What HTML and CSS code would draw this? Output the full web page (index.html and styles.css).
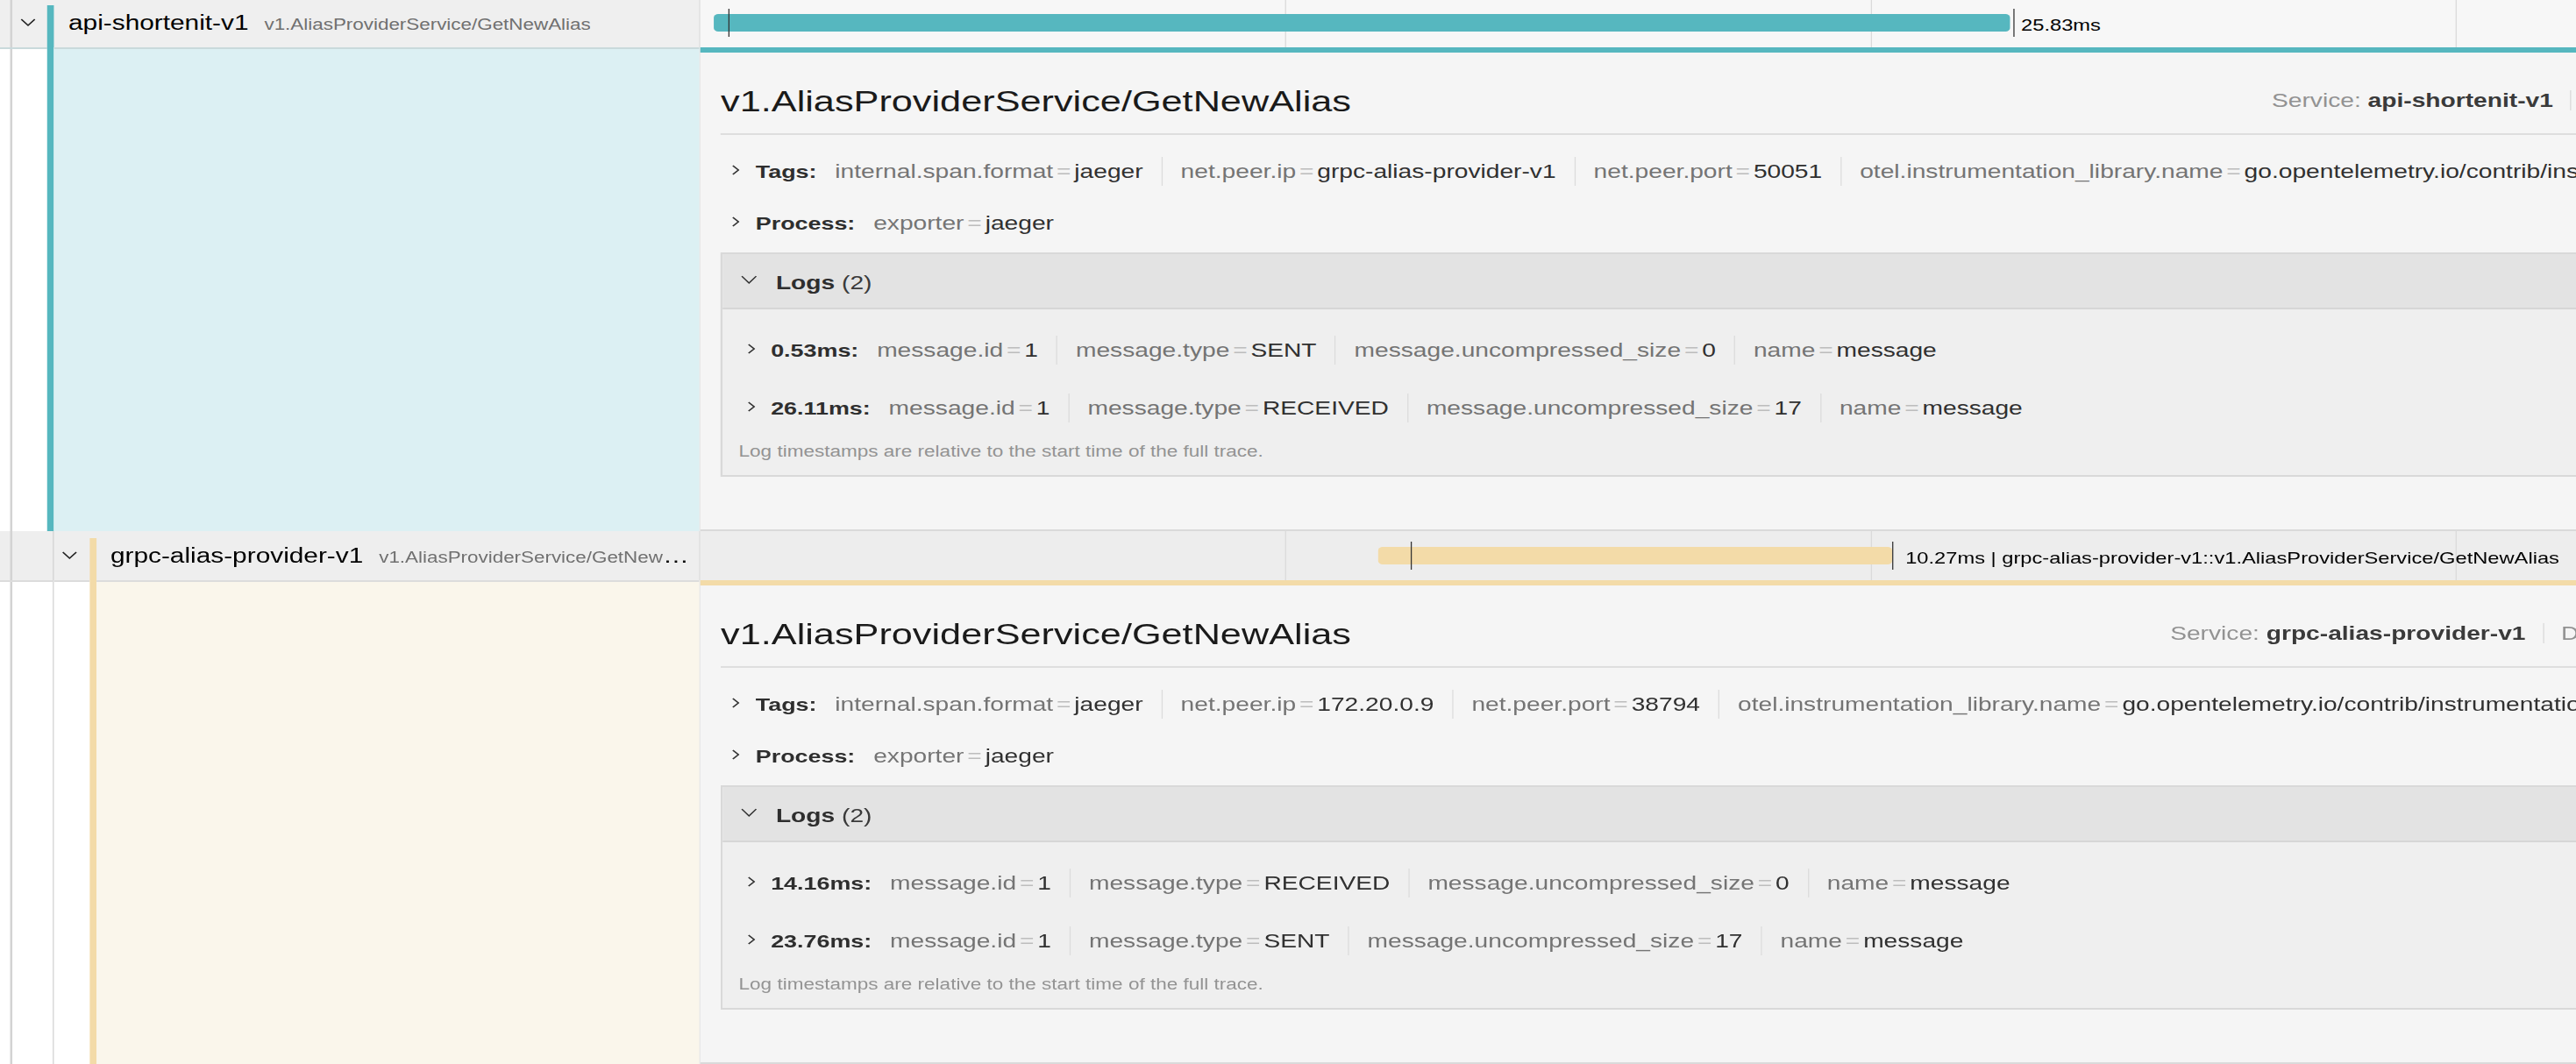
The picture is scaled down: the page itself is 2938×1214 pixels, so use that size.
FILE: index.html
```html
<!DOCTYPE html>
<html lang="en">
<head>
<meta charset="utf-8">
<title>Trace timeline</title>
<link rel="stylesheet" href="styles.css">
</head>
<body>
<div class="page">

  <section class="span-block teal">
    <div class="span-row row-light">
      <div class="name-cell">
        <div class="guides"><span class="guide"></span></div>
        <div class="toggle"><svg class="chev-down" viewBox="0 0 14 9"><polyline points="1,1 7,8 13,1"/></svg></div>
        <div class="stripe"></div>
        <div class="name"><div class="name-text"><span class="svc">api-shortenit-v1</span><span class="op">v1.AliasProviderService/GetNewAlias</span></div></div>
      </div>
      <div class="timeline-cell">
        <span class="grid g1"></span><span class="grid g2"></span><span class="grid g3"></span>
        <div class="bar" style="left:0.6%;width:55.39%"></div>
        <span class="log-tick" style="left:1.23%"></span>
        <span class="log-tick" style="left:56.1%"></span>
        <span class="bar-label" style="left:56.44%">25.83ms</span>
      </div>
    </div>
    <div class="detail-row">
      <div class="detail-name">
        <div class="guides"><span class="guide"></span></div>
        <div class="toggle-space"></div>
        <div class="stripe"></div>
        <div class="tint"></div>
      </div>
      <div class="detail-view">
        <div class="dv-header">
          <h2 class="dv-title">v1.AliasProviderService/GetNewAlias</h2>
          <ul class="overview">
            <li><span class="ov-label">Service:</span> <strong>api-shortenit-v1</strong></li>
            <li class="ov-sep"></li>
            <li><span class="ov-label">Duration:</span> <strong>25.83ms</strong></li>
            <li class="ov-sep"></li>
            <li><span class="ov-label">Start Time:</span> <strong>0.5ms</strong></li>
          </ul>
        </div>
        <div class="kv-line first">
          <svg class="chev-right" viewBox="0 0 7 12"><polyline points="1,1 6,6 1,11"/></svg>
          <span class="kv-label">Tags:</span>
          <ul class="kv-items">
            <li><span class="k">internal.span.format</span><span class="eq">=</span><span class="v">jaeger</span></li>
            <li><span class="k">net.peer.ip</span><span class="eq">=</span><span class="v">grpc-alias-provider-v1</span></li>
            <li><span class="k">net.peer.port</span><span class="eq">=</span><span class="v">50051</span></li>
            <li><span class="k">otel.instrumentation_library.name</span><span class="eq">=</span><span class="v">go.opentelemetry.io/contrib/instrumentation/google.golang.org/grpc/otelgrpc</span></li>
            <li><span class="k">rpc.method</span><span class="eq">=</span><span class="v">GetNewAlias</span></li>
          </ul>
        </div>
        <div class="kv-line second">
          <svg class="chev-right" viewBox="0 0 7 12"><polyline points="1,1 6,6 1,11"/></svg>
          <span class="kv-label">Process:</span>
          <ul class="kv-items">
            <li><span class="k">exporter</span><span class="eq">=</span><span class="v">jaeger</span></li>
          </ul>
        </div>
        <div class="logs">
          <div class="logs-head">
            <svg class="chev-logs" viewBox="0 0 15 10"><polyline points="1,1 7.5,9 14,1"/></svg>
            <span class="logs-title"><strong>Logs</strong> (2)</span>
          </div>
          <div class="logs-body">
            <div class="kv-line log">
              <svg class="chev-right" viewBox="0 0 7 12"><polyline points="1,1 6,6 1,11"/></svg>
              <span class="kv-label">0.53ms:</span>
              <ul class="kv-items">
                <li><span class="k">message.id</span><span class="eq">=</span><span class="v">1</span></li>
                <li><span class="k">message.type</span><span class="eq">=</span><span class="v">SENT</span></li>
                <li><span class="k">message.uncompressed_size</span><span class="eq">=</span><span class="v">0</span></li>
                <li><span class="k">name</span><span class="eq">=</span><span class="v">message</span></li>
              </ul>
            </div>
            <div class="kv-line log next">
              <svg class="chev-right" viewBox="0 0 7 12"><polyline points="1,1 6,6 1,11"/></svg>
              <span class="kv-label">26.11ms:</span>
              <ul class="kv-items">
                <li><span class="k">message.id</span><span class="eq">=</span><span class="v">1</span></li>
                <li><span class="k">message.type</span><span class="eq">=</span><span class="v">RECEIVED</span></li>
                <li><span class="k">message.uncompressed_size</span><span class="eq">=</span><span class="v">17</span></li>
                <li><span class="k">name</span><span class="eq">=</span><span class="v">message</span></li>
              </ul>
            </div>
            <p class="logs-foot">Log timestamps are relative to the start time of the full trace.</p>
          </div>
        </div>
      </div>
    </div>
  </section>

  <section class="span-block tan">
    <div class="span-row row-dark">
      <div class="name-cell">
        <div class="guides"><span class="guide"></span><span class="guide"></span></div>
        <div class="toggle"><svg class="chev-down" viewBox="0 0 14 9"><polyline points="1,1 7,8 13,1"/></svg></div>
        <div class="stripe"></div>
        <div class="name"><div class="name-text"><span class="svc">grpc-alias-provider-v1</span><span class="op">v1.AliasProviderService/GetNewAlias</span></div></div>
      </div>
      <div class="timeline-cell">
        <span class="grid g1"></span><span class="grid g2"></span><span class="grid g3"></span>
        <div class="bar" style="left:28.97%;width:21.96%"></div>
        <span class="log-tick" style="left:30.37%"></span>
        <span class="log-tick" style="left:50.93%"></span>
        <span class="bar-label" style="left:51.5%">10.27ms | grpc-alias-provider-v1::v1.AliasProviderService/GetNewAlias</span>
      </div>
    </div>
    <div class="detail-row">
      <div class="detail-name">
        <div class="guides"><span class="guide"></span><span class="guide"></span></div>
        <div class="toggle-space"></div>
        <div class="stripe"></div>
        <div class="tint"></div>
      </div>
      <div class="detail-view">
        <div class="dv-header">
          <h2 class="dv-title">v1.AliasProviderService/GetNewAlias</h2>
          <ul class="overview">
            <li><span class="ov-label">Service:</span> <strong>grpc-alias-provider-v1</strong></li>
            <li class="ov-sep"></li>
            <li><span class="ov-label">Duration:</span> <strong>10.27ms</strong></li>
            <li class="ov-sep"></li>
            <li><span class="ov-label">Start Time:</span> <strong>13.24ms</strong></li>
          </ul>
        </div>
        <div class="kv-line first">
          <svg class="chev-right" viewBox="0 0 7 12"><polyline points="1,1 6,6 1,11"/></svg>
          <span class="kv-label">Tags:</span>
          <ul class="kv-items">
            <li><span class="k">internal.span.format</span><span class="eq">=</span><span class="v">jaeger</span></li>
            <li><span class="k">net.peer.ip</span><span class="eq">=</span><span class="v">172.20.0.9</span></li>
            <li><span class="k">net.peer.port</span><span class="eq">=</span><span class="v">38794</span></li>
            <li><span class="k">otel.instrumentation_library.name</span><span class="eq">=</span><span class="v">go.opentelemetry.io/contrib/instrumentation/google.golang.org/grpc/otelgrpc</span></li>
            <li><span class="k">rpc.method</span><span class="eq">=</span><span class="v">GetNewAlias</span></li>
          </ul>
        </div>
        <div class="kv-line second">
          <svg class="chev-right" viewBox="0 0 7 12"><polyline points="1,1 6,6 1,11"/></svg>
          <span class="kv-label">Process:</span>
          <ul class="kv-items">
            <li><span class="k">exporter</span><span class="eq">=</span><span class="v">jaeger</span></li>
          </ul>
        </div>
        <div class="logs">
          <div class="logs-head">
            <svg class="chev-logs" viewBox="0 0 15 10"><polyline points="1,1 7.5,9 14,1"/></svg>
            <span class="logs-title"><strong>Logs</strong> (2)</span>
          </div>
          <div class="logs-body">
            <div class="kv-line log">
              <svg class="chev-right" viewBox="0 0 7 12"><polyline points="1,1 6,6 1,11"/></svg>
              <span class="kv-label">14.16ms:</span>
              <ul class="kv-items">
                <li><span class="k">message.id</span><span class="eq">=</span><span class="v">1</span></li>
                <li><span class="k">message.type</span><span class="eq">=</span><span class="v">RECEIVED</span></li>
                <li><span class="k">message.uncompressed_size</span><span class="eq">=</span><span class="v">0</span></li>
                <li><span class="k">name</span><span class="eq">=</span><span class="v">message</span></li>
              </ul>
            </div>
            <div class="kv-line log next">
              <svg class="chev-right" viewBox="0 0 7 12"><polyline points="1,1 6,6 1,11"/></svg>
              <span class="kv-label">23.76ms:</span>
              <ul class="kv-items">
                <li><span class="k">message.id</span><span class="eq">=</span><span class="v">1</span></li>
                <li><span class="k">message.type</span><span class="eq">=</span><span class="v">SENT</span></li>
                <li><span class="k">message.uncompressed_size</span><span class="eq">=</span><span class="v">17</span></li>
                <li><span class="k">name</span><span class="eq">=</span><span class="v">message</span></li>
              </ul>
            </div>
            <p class="logs-foot">Log timestamps are relative to the start time of the full trace.</p>
          </div>
        </div>
      </div>
    </div>
  </section>

</div>
</body>
</html>
```

FILE: styles.css
```css
* { box-sizing: border-box; margin: 0; padding: 0; }

html, body { overflow: hidden; background: #fff; }

body {
  font-family: "Liberation Sans", Arial, Helvetica, sans-serif;
  color: #000;
}

/* The reference is rendered with a horizontal stretch; the page is laid out
   at natural width and stretched once as a whole. */
.page {
  width: 2709.5px;
  margin-top: -2px;
  transform: scaleX(1.28);
  transform-origin: 0 0;
}

.span-block { --accent: #56b7bf; --tint: #dcf0f3; --edge: #c9d9db; }
.span-block.tan { --accent: #f3dba8; --tint: #faf6eb; --edge: #dcdcdc; }

/* ---------- span header row ---------- */
.span-row { display: flex; height: 56px; }

.name-cell {
  width: 623.5px;
  flex: none;
  display: flex;
  background: #efefef;
  border-right: 1px solid #d9d9d9;
}
.row-dark .name-cell { background: #eeeeee; }

.guides { display: flex; gap: 35.9px; padding-left: 9.4px; flex: none; }
.guide { width: 1.56px; background: #d3d3d3; }

.toggle {
  width: 31.25px;
  flex: none;
  display: flex;
  align-items: center;
  padding-left: 7px;
  padding-bottom: 2px;
}
.chev-down { width: 14px; height: 9px; fill: none; stroke: #222; stroke-width: 1.3; }

.stripe { width: 6.25px; flex: none; background: var(--accent); }
.span-row .stripe { margin-top: 8px; }

.name {
  flex: 1;
  min-width: 0;
  display: flex;
  align-items: center;
  padding: 0 5px 0 12.5px;
}
.name-text {
  white-space: nowrap;
  overflow: hidden;
  text-overflow: ellipsis;
  font-size: 23.3px;
  color: #000;
}
.op { font-size: 17.5px; color: #707070; margin-left: 14px; }

.timeline-cell { flex: 1; position: relative; background: #f7f7f7; }
.row-dark .timeline-cell { background: #ededed; }

.grid { position: absolute; top: 0; bottom: 0; width: 1.2px; background: #dadada; }
.g1 { left: 25%; }
.g2 { left: 50%; }
.g3 { left: 75%; }

.bar {
  position: absolute;
  top: 18px;
  height: 20px;
  background: var(--accent);
  border-radius: 4px;
}
.log-tick { position: absolute; top: 12px; height: 32px; width: 1.2px; background: #333; }
.bar-label {
  position: absolute;
  top: 3px;
  line-height: 56px;
  font-size: 18.5px;
  white-space: nowrap;
  color: #000;
}

/* ---------- detail row ---------- */
.detail-row { display: flex; }

.detail-name {
  width: 623.5px;
  flex: none;
  display: flex;
  border-right: 1px solid #d9d9d9;
}
.detail-name .guides,
.detail-name .toggle-space,
.detail-name .tint { border-top: 2px solid var(--edge); }
.toggle-space { width: 31.25px; flex: none; }
.tint { flex: 1; background: var(--tint); }

.detail-view {
  flex: 1;
  min-width: 0;
  overflow: hidden;
  background: #f5f5f5;
  border-top: 6px solid var(--accent);
  border-bottom: 2px solid #dadada;
  padding: 0 14.3px 60px 18.75px;
  white-space: nowrap;
}

.dv-header {
  display: flex;
  align-items: center;
  padding: 34.5px 0 17px;
  border-bottom: 2px solid #dedede;
}
.dv-title {
  font-size: 33.8px;
  font-weight: normal;
  line-height: 40.5px;
  color: #1a1a1a;
  flex: none;
}
.overview {
  margin-left: auto;
  display: flex;
  align-items: center;
  list-style: none;
  font-size: 22px;
  line-height: 26.4px;
}
.ov-label { color: #929292; }
.overview strong { color: #3a3a3a; }
.ov-sep { width: 1px; height: 23px; background: #d9d9d9; margin: 0 15.3px; }

.kv-line {
  display: flex;
  align-items: center;
  height: 33px;
  line-height: 33px;
  font-size: 22px;
}
.kv-line.first { margin-top: 25px; }
.kv-line.second { margin-top: 26px; }
.kv-line.next { margin-top: 33px; }

.chev-right {
  width: 7px;
  height: 14px;
  flex: none;
  margin: 0 14px 4px 10px;
  fill: none;
  stroke: #333;
  stroke-width: 1.4;
}
.log .chev-right { margin-left: 7.6px; }

.kv-label { font-weight: bold; font-size: 21px; color: #2e2e2e; }
.kv-items { display: flex; list-style: none; }
.kv-items li { padding: 0 16.3px; border-left: 1px solid #dcdcdc; }
.kv-items li:first-child { border-left: none; }
.k { color: #747474; }
.eq { color: #bdbdbd; padding: 0 3px; }
.v { color: #303030; }

.logs {
  margin-top: 17px;
  border: 2px solid #d9d9d9;
}
.logs-head {
  display: flex;
  align-items: center;
  background: #e3e3e3;
  border-bottom: 2px solid #d6d6d6;
  padding: 16px 0 12px;
  line-height: 33px;
  font-size: 22px;
}
.chev-logs {
  width: 14.8px;
  height: 10px;
  flex: none;
  margin: 0 16.4px 7px 15.9px;
  fill: none;
  stroke: #333;
  stroke-width: 1.3;
}
.logs-title { color: #3a3a3a; }
.logs-title strong { color: #2e2e2e; }

.logs-body {
  background: #efefef;
  padding: 30px 0 14px 14px;
}
.logs-foot {
  font-size: 17.6px;
  line-height: 26.4px;
  color: #939393;
  margin-top: 19.6px;
}
```
